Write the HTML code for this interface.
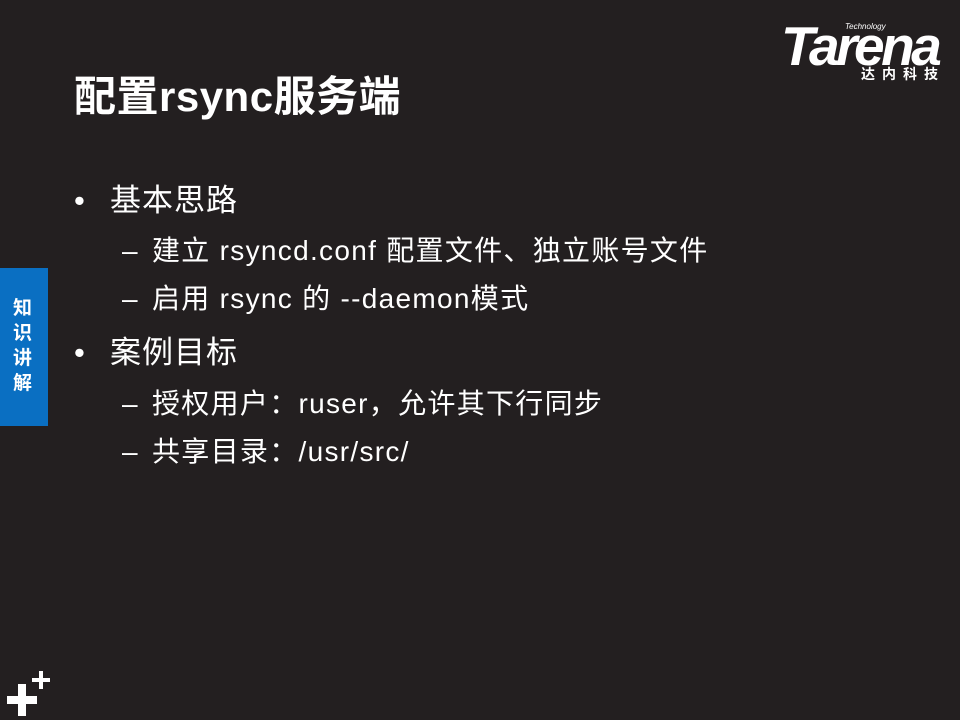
<!DOCTYPE html>
<html><head><meta charset="utf-8"><style>
body{margin:0;width:960px;height:720px;background:#231f20;position:relative;overflow:hidden;font-family:"Liberation Sans","Noto Sans CJK SC",sans-serif;color:#fff}
.a{position:absolute;white-space:nowrap}
.t{left:74px;top:72px;font-size:42px;font-weight:bold;line-height:50px;letter-spacing:0.5px}
.l1{font-size:31px;line-height:36px;letter-spacing:1px}
.l2{font-size:28px;line-height:32px;letter-spacing:1.3px}
</style></head><body>
<div class="a" style="left:845px;top:22px;font-size:8px;font-style:italic">Technology</div>
<div class="a" style="left:781px;top:16px;font-size:55px;font-weight:bold;font-style:italic;letter-spacing:-3.5px;line-height:60px">Tarena</div>
<div class="a" style="left:861px;top:64px;font-size:14px;font-weight:bold;letter-spacing:7px">达内科技</div>
<div class="a t">配置rsync服务端</div>
<div class="a" style="left:74px;top:183px;font-size:31px;line-height:36px">•</div>
<div class="a l1" style="left:110px;top:183px">基本思路</div>
<div class="a l2" style="left:122px;top:235px">–</div>
<div class="a l2" style="left:152px;top:235px">建立 rsyncd.conf 配置文件、独立账号文件</div>
<div class="a l2" style="left:122px;top:283px">–</div>
<div class="a l2" style="left:152px;top:283px">启用 rsync 的 --daemon模式</div>
<div class="a" style="left:74px;top:335px;font-size:31px;line-height:36px">•</div>
<div class="a l1" style="left:110px;top:335px">案例目标</div>
<div class="a l2" style="left:122px;top:388px">–</div>
<div class="a l2" style="left:152px;top:388px">授权用户：ruser，允许其下行同步</div>
<div class="a l2" style="left:122px;top:436px">–</div>
<div class="a l2" style="left:152px;top:436px">共享目录：/usr/src/</div>
<div class="a" style="left:0;top:268px;width:48px;height:158px;background:#0a6fc2"></div>
<div class="a" style="left:13px;top:296px;font-size:19px;font-weight:bold;line-height:25px;width:24px;white-space:normal">知识讲解</div>
<div class="a" style="left:7px;top:696px;width:30px;height:8px;background:#fff"></div>
<div class="a" style="left:18px;top:684px;width:8px;height:32px;background:#fff"></div>
<div class="a" style="left:32px;top:678px;width:18px;height:4px;background:#fff"></div>
<div class="a" style="left:39px;top:671px;width:4px;height:18px;background:#fff"></div>
</body></html>
